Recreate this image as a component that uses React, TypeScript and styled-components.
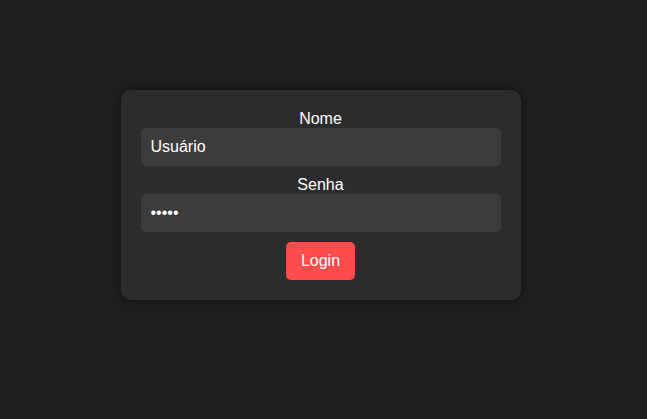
import React from "react";
import styled, { createGlobalStyle } from "styled-components";

const Global = createGlobalStyle`
  html, body {
    margin: 0;
    padding: 0;
    background: #1e1e1e;
    font-family: "Liberation Sans", Arial, sans-serif;
    color: #ffffff;
  }
`;

const Page = styled.div`
  display: flex;
  justify-content: center;
  align-items: flex-start;
  padding: 90px 6px 0 0;
  min-height: 419px;
  box-sizing: border-box;
`;

const Card = styled.form`
  width: 400px;
  box-sizing: border-box;
  padding: 20px;
  background: #2c2c2c;
  border-radius: 10px;
  box-shadow: 0 0 10px rgba(0, 0, 0, 0.5);
  display: flex;
  flex-direction: column;
  align-items: stretch;
`;

const Label = styled.label`
  display: block;
  text-align: center;
  font-size: 16px;
  line-height: 18px;
  color: #ffffff;
`;

const Input = styled.input`
  height: 38px;
  box-sizing: border-box;
  padding: 0 10px;
  margin-bottom: 10px;
  border: none;
  border-radius: 5px;
  background: #3c3c3c;
  color: #ffffff;
  font-family: "Liberation Sans", Arial, sans-serif;
  font-size: 16px;
  outline: none;
`;

const Button = styled.button`
  align-self: center;
  height: 38px;
  padding: 0 15px;
  border: none;
  border-radius: 5px;
  background: #ff4b4b;
  color: #ffffff;
  font-family: "Liberation Sans", Arial, sans-serif;
  font-size: 16px;
  cursor: pointer;
`;

export default function App() {
  return (
    <>
      <Global />
      <Page>
        <Card onSubmit={(e) => e.preventDefault()}>
          <Label htmlFor="nome">Nome</Label>
          <Input id="nome" type="text" defaultValue="Usuário" />
          <Label htmlFor="senha">Senha</Label>
          <Input id="senha" type="password" defaultValue="12345" />
          <Button type="submit">Login</Button>
        </Card>
      </Page>
    </>
  );
}
